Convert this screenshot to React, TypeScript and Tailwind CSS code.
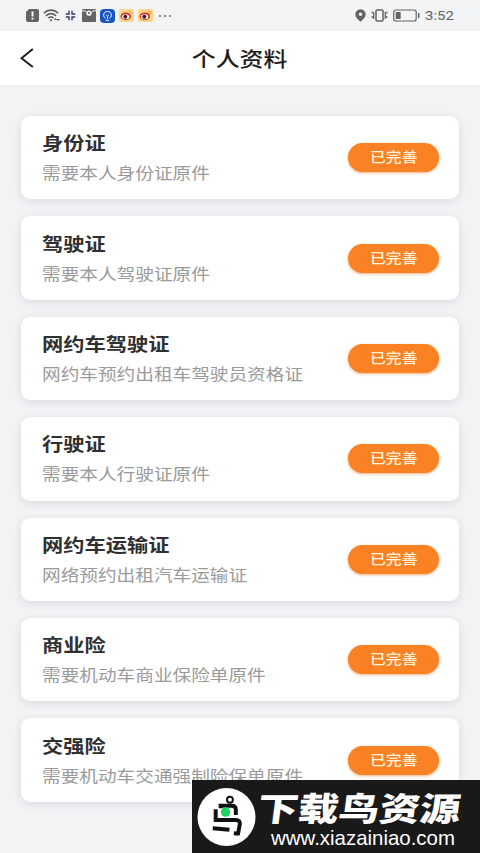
import * as React from "react";

const documents = [
    { title: "身份证", hint: "需要本人身份证原件" },
    { title: "驾驶证", hint: "需要本人驾驶证原件" },
    { title: "网约车驾驶证", hint: "网约车预约出租车驾驶员资格证" },
    { title: "行驶证", hint: "需要本人行驶证原件" },
    { title: "网约车运输证", hint: "网络预约出租汽车运输证" },
    { title: "商业险", hint: "需要机动车商业保险单原件" },
    { title: "交强险", hint: "需要机动车交通强制险保单原件" },
];

const WeiboIcon = () => (
    <svg viewBox="0 0 15 13" className="h-[13px] w-[15px]">
        <rect width="15" height="13" rx="2" fill="#fbd68a" />
        <ellipse cx="6.8" cy="7.3" rx="5.2" ry="3.9" fill="#c8382c" />
        <ellipse cx="6.6" cy="7.7" rx="3.7" ry="2.5" fill="#fff" />
        <circle cx="6.3" cy="7.8" r="2" fill="#4a1616" />
        <path d="M10 2.2c1.8-.2 3 1 2.8 2.8M10 3.9c.8 0 1.1.4 1.1 1.1" fill="none" stroke="#f0963a" strokeWidth="1" />
    </svg>
);

const StatusBar = () => (
    <div className="flex h-[31px] shrink-0 items-center justify-between px-[26px]">
        <div className="flex items-center">
            <svg viewBox="0 0 13 13" className="h-[13px] w-[13px]">
                <path d="M3 0h8a2 2 0 0 1 2 2v9a2 2 0 0 1-2 2H2a2 2 0 0 1-2-2V3z" fill="#636466" />
                <path d="M6.5 2.6v5M6.5 8.8v1.8" stroke="#fff" strokeWidth="1.9" />
            </svg>
            <svg viewBox="0 0 17 13" className="ml-1 h-[13px] w-[17px]" fill="none" stroke="#636466" strokeWidth="1.6">
                <path d="M.8 4.3C5 .1 11 .1 15.2 4.3M3 6.9c3-3 7-3 10 0M5.3 9.3c1.6-1.6 3.8-1.6 5.4 0" />
                <circle cx="8" cy="11.3" r="1.1" fill="#636466" stroke="none" />
                <path d="M11.3 10.6h5.2M12.8 9.4l-1.4 1.2M15 11.8l1.4-1.2" strokeWidth="1" />
            </svg>
            <svg viewBox="0 0 11 11" className="ml-[5px] h-[11px] w-[11px]" fill="none" stroke="#363d63" strokeWidth="1.4">
                <path d="M4 .8V4H.8M7 .8V4h3.2M4 10.2V7H.8M7 10.2V7h3.2" />
            </svg>
            <svg viewBox="0 0 14 13" className="ml-[6px] h-[13px] w-[14px]">
                <rect width="14" height="13" rx="1" fill="#636466" />
                <path d="M0 1.8h3l1.5 1.7M14 1.8h-3L9.500 3.500" fill="none" stroke="#f1f3f5" strokeWidth="1" />
                <circle cx="7" cy="4.2" r="2.6" fill="#f1f3f5" />
                <circle cx="7" cy="4" r="1.1" fill="#636466" />
            </svg>
            <svg viewBox="0 0 15 14" className="ml-1 h-[14px] w-[15px]" fill="none" stroke="#fff">
                <rect width="15" height="14" rx="4" fill="#1656c9" stroke="none" />
                <path d="M5.6 9.2C2 7.2 3.7 2.4 7.5 2.4s5.5 4.8 1.9 6.8M5.8 11.3h3.4" strokeWidth="1" />
                <path d="M6 5.8l1.5 1.4L9 5.8M7.5 7.2v2.6" strokeWidth=".8" />
            </svg>
            <div className="ml-1 flex gap-1">
                <WeiboIcon />
                <WeiboIcon />
            </div>
            <div className="ml-[6px] flex gap-[3px]">
                <i className="size-[2px] rounded-full bg-[#636466]" />
                <i className="size-[2px] rounded-full bg-[#636466]" />
                <i className="size-[2px] rounded-full bg-[#636466]" />
            </div>
        </div>
        <div className="flex items-center">
            <svg viewBox="0 0 11 13" className="h-[13px] w-[11px]">
                <path d="M5.5.3a5.2 5.2 0 0 1 5.2 5.2c0 2.8-2.7 5-5.2 7.2C3 10.5.3 8.3.3 5.5A5.2 5.2 0 0 1 5.5.3z" fill="#636466" />
                <circle cx="5.5" cy="5.2" r="1.7" fill="#f1f3f5" />
            </svg>
            <svg viewBox="0 0 17 13" className="ml-[5px] h-[13px] w-[17px]" fill="none" stroke="#636466">
                <rect x="5" y="1" width="7" height="11" rx="1" strokeWidth="1.5" />
                <path d="M2.7 3v7M14.3 3v7" strokeWidth="1.3" />
                <path d="M1.2 2.5v2M1.2 7v2M15.8 2.5v2M15.8 7v2" strokeWidth="1.2" />
            </svg>
            <svg viewBox="0 0 27 13" className="ml-[5px] h-[13px] w-[27px]">
                <rect x=".7" y="1" width="22.5" height="11" rx="2.2" fill="none" stroke="#636466" strokeWidth="1.2" />
                <rect x="2.7" y="3" width="5" height="7" rx=".8" fill="#636466" />
                <path d="M25.7 4v5" stroke="#636466" strokeWidth="1.5" />
            </svg>
            <span className="ml-[5px] w-[29px] whitespace-nowrap font-['Roboto',sans-serif] text-[13px] leading-4 text-[#636466]">
                <span className="inline-block origin-left scale-x-[1.15]">3:52</span>
            </span>
        </div>
    </div>
);

const Header = () => (
    <header className="grid h-[55px] shrink-0 grid-cols-[1fr_auto_1fr] items-center border-b border-[#ebecee] bg-white">
        <svg viewBox="0 0 14 20" className="ml-5 h-5 w-[14px]" fill="none" stroke="#1b1b1b" strokeWidth="1.9">
            <path d="M12.8 1L1.5 10.2l11.3 8.7" />
        </svg>
        <h1 className="scale-x-[1.18] text-[20.3px] font-medium leading-7 text-[#1d1d1d]">个人资料</h1>
    </header>
);

const DocumentCard = ({ title, hint }: { title: string; hint: string }) => (
    <section className="flex h-[83.4px] shrink-0 items-center justify-between rounded-[9px] bg-white pr-5 pl-[20.5px] shadow-[0_2px_9px_rgba(40,50,60,0.12)]">
        <div className="whitespace-nowrap pb-px">
            <h2 className="origin-left scale-x-[1.18] text-[18px] font-bold leading-[30px] text-[#303030]">{title}</h2>
            <p className="origin-left scale-x-[1.17] text-[15.95px] leading-[30px] text-[#9a9a9a]">{hint}</p>
        </div>
        <span className="flex h-[29px] w-[91px] items-center justify-center rounded-full bg-[#fb8224] pb-[3px] shadow-[0_1px_3px_rgba(220,110,30,0.55)]">
            <span className="scale-x-[1.15] text-[13.8px] font-medium leading-5 text-[#fff3dc]">已完善</span>
        </span>
    </section>
);

const Watermark = () => (
    <div className="absolute bottom-0 right-0 flex h-[73px] w-[288px] items-center bg-[#191919] pl-[5px] text-white">
        <svg viewBox="0 0 60 60" className="h-[60px] w-[59px] shrink-0" fill="none" stroke="#111" strokeWidth="4">
            <circle cx="30" cy="30" r="29.5" fill="#fff" stroke="none" />
            <circle cx="33.5" cy="12.5" r="3" strokeWidth="2" />
            <path d="M24 21v-2.500h11c3 0 4.500 1 4.500 4v5.500M19 22v11h20.500c3 0 4.500 1.500 4 4.500L41.500 48.500M37.500 46.500l4.500.5M16 41.500l17 1.500" />
            <circle cx="29" cy="25" r="4.8" fill="#20d45c" stroke="none" />
        </svg>
        <div className="ml-[2px] whitespace-nowrap pt-[5px]">
            <div className="origin-left -skew-x-6 scale-x-[1.23] text-[33px] font-black leading-[38px]">下载鸟资源</div>
            <div className="ml-[13px] origin-left scale-x-[0.973] font-['Liberation_Sans',sans-serif] text-[21px] leading-6">www.xiazainiao.com</div>
        </div>
    </div>
);

const App = () => {
    return (
        <main className="relative flex h-[853px] w-[480px] flex-col overflow-hidden bg-[#f1f3f5] font-['Noto_Sans_CJK_SC',sans-serif]">
            <StatusBar />
            <Header />
            <div className="flex flex-col gap-[17px] px-[21px] pt-[30px]">
                {documents.map((item) => (
                    <DocumentCard key={item.title} title={item.title} hint={item.hint} />
                ))}
            </div>
            <Watermark />
        </main>
    );
};

export default App;
